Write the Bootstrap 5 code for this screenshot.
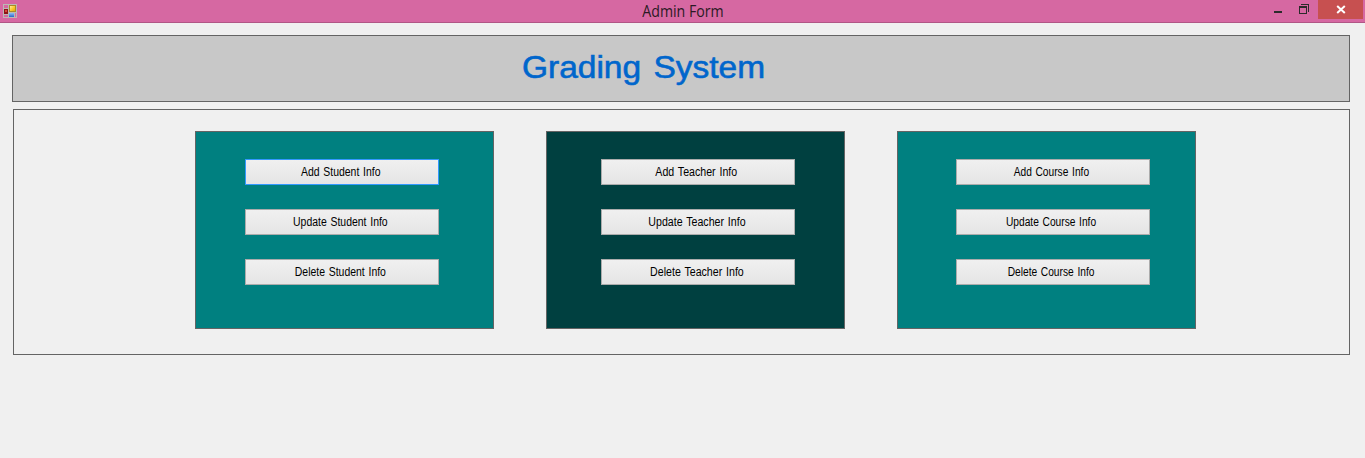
<!DOCTYPE html>
<html lang="en">
<head>
<meta charset="utf-8">
<meta name="viewport" content="width=device-width, initial-scale=1">
<title>Admin Form</title>
<link href="https://cdn.jsdelivr.net/npm/bootstrap@5.3.0/dist/css/bootstrap.min.css" rel="stylesheet">
<style>
body { background: #f0f0f0; font-family: "Liberation Sans", Arial, sans-serif; color: #000; overflow: hidden; }
.titlebar { height: 23px; background: #d668a2; border-bottom: 1px solid #b15686; display: grid; grid-template-columns: 1fr auto 1fr; }
.titlebar h1 { font: 400 16px/22px "Open Sans", "Noto Sans", sans-serif; color: #2b1a24; transform: scaleX(.885); }
.app-icon { margin: 4px 0 0 3px; }
.win-btn { border: 0; background: none; padding: 0; height: 19px; }
.win-close { width: 45px; margin-right: 2px; background: #c75050; }
.form-body { padding: 12px 15px 0 12px; }
.banner { height: 67px; background: #c8c8c8; border: 1px solid #646464; }
.banner h2 { font-size: 32px; line-height: 38px; word-spacing: 3px; color: #0066cc; -webkit-text-stroke: .6px #0066cc; margin: 12px 0 0 509px; transform: scaleX(1.046); transform-origin: left; }
.workspace { height: 246px; margin: 7px 0 0 1px; padding: 21px 0 0 181px; border: 1px solid #646464; gap: 52px; }
.tile { width: 299px; height: 198px; border: 1px solid #646464; background: #008080; gap: 24px; padding: 27px 0 0 49px; }
.tile-dark { background: #004040; padding-left: 54px; }
.tile-course { padding-left: 58px; }
.btn-form { width: 194px; height: 26px; padding: 0 3px 0 0; border: 1px solid #acacac; border-radius: 0; background: linear-gradient(#f0f0f0, #e5e5e5); color: #000; font-size: 12px; line-height: 24px; }
.btn-form span { display: inline-block; word-spacing: 1px; transform: scaleX(.87); }
.tile-dark .btn-form span { transform: scaleX(.885); }
.tile-course .btn-form span { transform: scaleX(.85); }
.btn-form.focused { border-color: #3399ff; }
</style>
</head>
<body>
<header class="titlebar">
  <div>
    <svg class="app-icon d-block" width="14" height="14" viewBox="0 0 14 14" shape-rendering="crispEdges">
      <defs>
        <linearGradient id="gold" x2="1" y2="1"><stop stop-color="#fff0a0"/><stop offset=".5" stop-color="#fbcb35"/><stop offset="1" stop-color="#e8a800"/></linearGradient>
        <linearGradient id="blue" x2="0" y2="1"><stop stop-color="#8bbcf5"/><stop offset="1" stop-color="#2c65c8"/></linearGradient>
      </defs>
      <path fill="none" stroke="#bcb9b4" d="M.5.5h13v13H.5zM5.500 0v14M0 4.500h5M0 10.500h5M5 8.500h9M11.500 9v5"/>
      <path fill="#a88b28" d="M6 1h7v7H6z"/><path fill="url(#gold)" d="M7 2h5v5H7z"/>
      <path fill="#8c1616" d="M1 5h4v5H1z"/><path fill="#d8443a" d="M2 6h2v2H2z"/>
      <path fill="url(#blue)" d="M6 9h5v4H6z"/>
    </svg>
  </div>
  <h1 class="m-0">Admin Form</h1>
  <div class="d-flex justify-content-end">
    <button class="win-btn d-flex" aria-label="Minimize"><svg width="27" height="19" shape-rendering="crispEdges"><path fill="#2b2b2b" d="M3 11h8v2H3z"/></svg></button>
    <button class="win-btn d-flex" aria-label="Restore"><svg width="20" height="19" shape-rendering="crispEdges"><path fill="#2b2b2b" fill-rule="evenodd" d="M1 6h8v8H1zM2 8v5h6V8zM3 4h8v8h-1V5H3z"/></svg></button>
    <button class="win-btn win-close d-flex" aria-label="Close"><svg width="45" height="19"><path fill="none" stroke="#fff" stroke-width="2" d="M19.200 6l7.600 7M26.800 6l-7.600 7"/></svg></button>
  </div>
</header>
<main class="form-body">
  <section class="banner"><h2>Grading System</h2></section>
  <section class="workspace d-flex align-items-start">
    <div class="tile d-flex flex-column">
      <button class="btn btn-form focused"><span>Add Student Info</span></button>
      <button class="btn btn-form"><span>Update Student Info</span></button>
      <button class="btn btn-form"><span>Delete Student Info</span></button>
    </div>
    <div class="tile tile-dark d-flex flex-column">
      <button class="btn btn-form"><span>Add Teacher Info</span></button>
      <button class="btn btn-form"><span>Update Teacher Info</span></button>
      <button class="btn btn-form"><span>Delete Teacher Info</span></button>
    </div>
    <div class="tile tile-course d-flex flex-column">
      <button class="btn btn-form"><span>Add Course Info</span></button>
      <button class="btn btn-form"><span>Update Course Info</span></button>
      <button class="btn btn-form"><span>Delete Course Info</span></button>
    </div>
  </section>
</main>
<script src="https://cdn.jsdelivr.net/npm/bootstrap@5.3.0/dist/js/bootstrap.bundle.min.js"></script>
</body>
</html>
